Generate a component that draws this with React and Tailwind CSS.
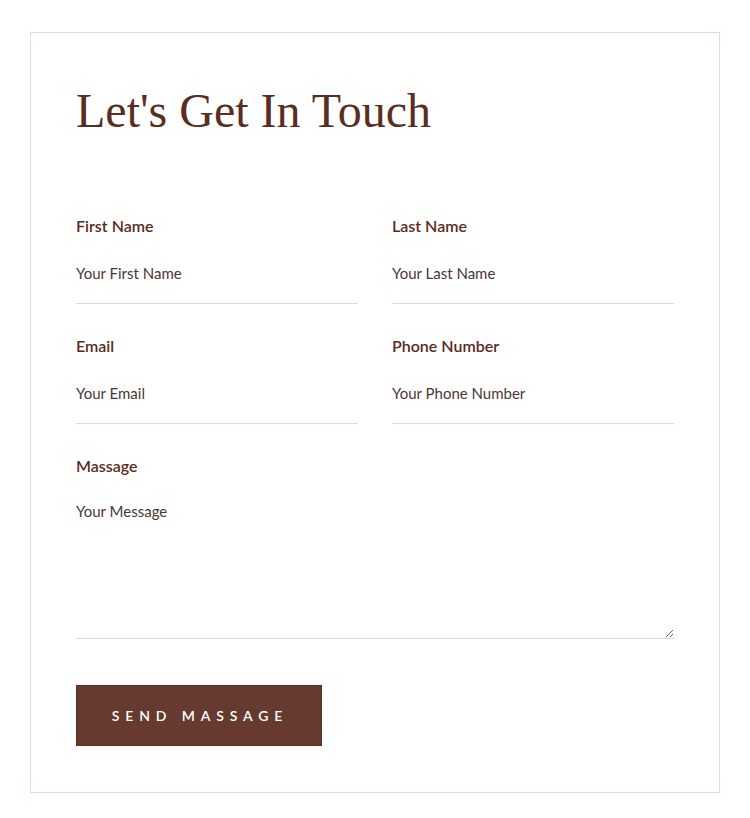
export default function App() {
  const label = "block text-[16px] leading-[20px] font-semibold text-[#5a2a20]";
  const inputCls =
    "mt-[17px] block w-full border-0 border-b border-[#e8d4c9] bg-transparent pt-[10px] pb-[20px] text-[15px] leading-[20px] font-normal text-[#4a3733] placeholder:text-[#4a3733] outline-none";
  const font = { fontFamily: "Lato, 'Noto Sans', sans-serif" };
  return (
    <div className="bg-white pt-[32px] pb-[26px] px-[30px]" style={font}>
      <div className="border border-[#ead8ce] px-[45px] pt-[50px] pb-[46px]">
        <h1
          className="text-[48px] leading-[56px] text-[#5a2d22] font-normal"
          style={{ fontFamily: "'Liberation Serif', serif" }}
        >
          Let's Get In Touch
        </h1>
        <form className="mt-[77px]" onSubmit={(e) => e.preventDefault()}>
          <div className="grid grid-cols-2 gap-x-[34px] gap-y-[32px]">
            <div>
              <label className={label}>First Name</label>
              <input className={inputCls} placeholder="Your First Name" />
            </div>
            <div>
              <label className={label}>Last Name</label>
              <input className={inputCls} placeholder="Your Last Name" />
            </div>
            <div>
              <label className={label}>Email</label>
              <input className={inputCls} placeholder="Your Email" />
            </div>
            <div>
              <label className={label}>Phone Number</label>
              <input className={inputCls} placeholder="Your Phone Number" />
            </div>
            <div className="col-span-2">
              <label className={label}>Massage</label>
              <textarea
                className="mt-[15px] block w-full h-[148px] border-0 border-b border-[#e8d4c9] bg-transparent pt-[10px] text-[15px] leading-[20px] font-normal text-[#4a3733] placeholder:text-[#4a3733] outline-none"
                placeholder="Your Message"
              />
            </div>
          </div>
          <button
            type="submit"
            className="mt-[46px] w-[246px] h-[61px] bg-[#663a2e] border border-[#5a3024] text-white text-[14px] font-semibold tracking-[0.42em] pl-[2px]"
          >
            SEND MASSAGE
          </button>
        </form>
      </div>
    </div>
  );
}
